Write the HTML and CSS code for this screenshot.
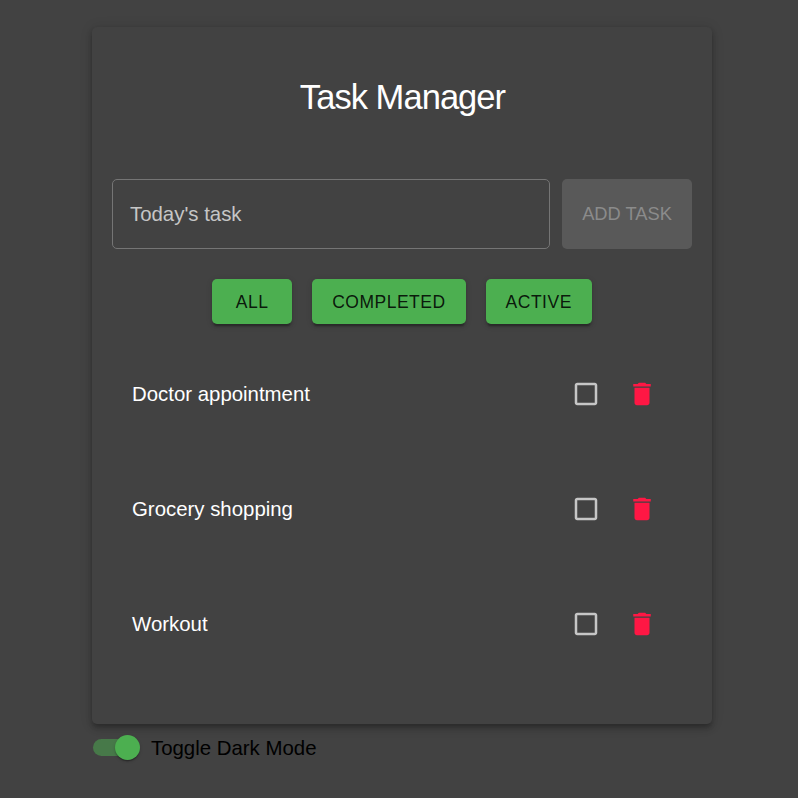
FILE: index.html
```html
<!DOCTYPE html>
<html lang="en">
<head>
<meta charset="utf-8">
<title>Task Manager</title>
<link rel="stylesheet" href="styles.css">
</head>
<body>
<main class="container">
  <section class="paper">
    <h1 class="title">Task Manager</h1>
    <form class="task-form">
      <div class="field">Today's task</div>
      <button class="add" type="button" disabled>ADD TASK</button>
    </form>
    <div class="filters">
      <button class="filter" type="button">ALL</button>
      <button class="filter" type="button">COMPLETED</button>
      <button class="filter" type="button">ACTIVE</button>
    </div>
    <ul class="tasks">
      <li class="task"><span class="name">Doctor appointment</span>
        <svg class="icon check" viewBox="0 0 24 24"><path d="M19 5v14H5V5h14m0-2H5c-1.1 0-2 .9-2 2v14c0 1.1.9 2 2 2h14c1.1 0 2-.9 2-2V5c0-1.1-.9-2-2-2z"/></svg>
        <svg class="icon trash" viewBox="0 0 24 24"><path d="M6 19c0 1.1.9 2 2 2h8c1.1 0 2-.9 2-2V7H6v12zM19 4h-3.5l-1-1h-5l-1 1H5v2h14V4z"/></svg></li>
      <li class="task"><span class="name">Grocery shopping</span>
        <svg class="icon check" viewBox="0 0 24 24"><path d="M19 5v14H5V5h14m0-2H5c-1.1 0-2 .9-2 2v14c0 1.1.9 2 2 2h14c1.1 0 2-.9 2-2V5c0-1.1-.9-2-2-2z"/></svg>
        <svg class="icon trash" viewBox="0 0 24 24"><path d="M6 19c0 1.1.9 2 2 2h8c1.1 0 2-.9 2-2V7H6v12zM19 4h-3.5l-1-1h-5l-1 1H5v2h14V4z"/></svg></li>
      <li class="task"><span class="name">Workout</span>
        <svg class="icon check" viewBox="0 0 24 24"><path d="M19 5v14H5V5h14m0-2H5c-1.1 0-2 .9-2 2v14c0 1.1.9 2 2 2h14c1.1 0 2-.9 2-2V5c0-1.1-.9-2-2-2z"/></svg>
        <svg class="icon trash" viewBox="0 0 24 24"><path d="M6 19c0 1.1.9 2 2 2h8c1.1 0 2-.9 2-2V7H6v12zM19 4h-3.5l-1-1h-5l-1 1H5v2h14V4z"/></svg></li>
    </ul>
  </section>
  <label class="toggle"><span class="track"><span class="thumb"></span></span><span class="label">Toggle Dark Mode</span></label>
</main>
</body>
</html>
```

FILE: styles.css
```css
* { box-sizing: border-box; }
body {
  margin: 0;
  min-height: 798px;
  background: #424242;
  font-family: "Liberation Sans", Arial, sans-serif;
  font-size: 20.4px;
}
.container { width: 620px; margin-left: 92px; padding-top: 27px; }
.paper {
  height: 697px;
  padding: 0 20px;
  border-radius: 5px;
  background: #424242;
  color: #fff;
  box-shadow: 0 2.5px 5px -1.25px rgba(0,0,0,.2), 0 5px 6.25px rgba(0,0,0,.14), 0 1.25px 12.5px rgba(0,0,0,.12);
}
.title {
  margin: 0;
  padding: 50px 0 0 1px;
  height: 152px;
  font-size: 34.5px;
  font-weight: 400;
  line-height: 41px;
  letter-spacing: -0.95px;
  text-align: center;
}
.task-form { display: flex; gap: 12px; height: 70px; }
.field {
  width: 438px;
  padding-left: 17px;
  border: 1px solid #757575;
  border-radius: 5px;
  color: #c6c6c6;
  line-height: 68px;
}
button {
  padding: 0 20px;
  border: 0;
  border-radius: 5px;
  font: 400 17.5px "Liberation Sans", Arial, sans-serif;
  letter-spacing: 0.02857em;
  white-space: nowrap;
}
.add { width: 130px; background: #595959; color: #8b8b8b; font-size: 18.3px; letter-spacing: 0; }
.filters { display: flex; justify-content: center; gap: 20px; margin-top: 30px; }
.filter {
  min-width: 80px;
  height: 45px;
  padding-top: 1px;
  background: #4caf50;
  color: rgba(0,0,0,.87);
  box-shadow: 0 3.75px 1.25px -2.5px rgba(0,0,0,.2), 0 2.5px 2.5px rgba(0,0,0,.14), 0 1.25px 6.25px rgba(0,0,0,.12);
}
.tasks { margin: 12px 0 0; padding: 0 35px 0 20px; list-style: none; }
.task { display: flex; align-items: center; height: 115px; }
.name { flex: 1; padding-top: 1px; }
.icon { width: 30px; height: 30px; }
.check { margin-right: 26px; fill: #c6c6c6; }
.trash { fill: #ff1744; }
.toggle {
  display: flex;
  align-items: center;
  gap: 15.5px;
  height: 47px;
  padding-left: 1px;
  color: #000;
}
.label { padding-top: 1px; }
.track {
  position: relative;
  width: 42.5px;
  height: 17.5px;
  border-radius: 9px;
  background: rgba(76,175,80,.5);
}
.thumb {
  position: absolute;
  top: -4px;
  left: 22px;
  width: 25px;
  height: 25px;
  border-radius: 50%;
  background: #4caf50;
  box-shadow: 0 2.5px 1.25px -1.25px rgba(0,0,0,.2), 0 1.25px 1.25px rgba(0,0,0,.14), 0 1.25px 3.75px rgba(0,0,0,.12);
}
```
